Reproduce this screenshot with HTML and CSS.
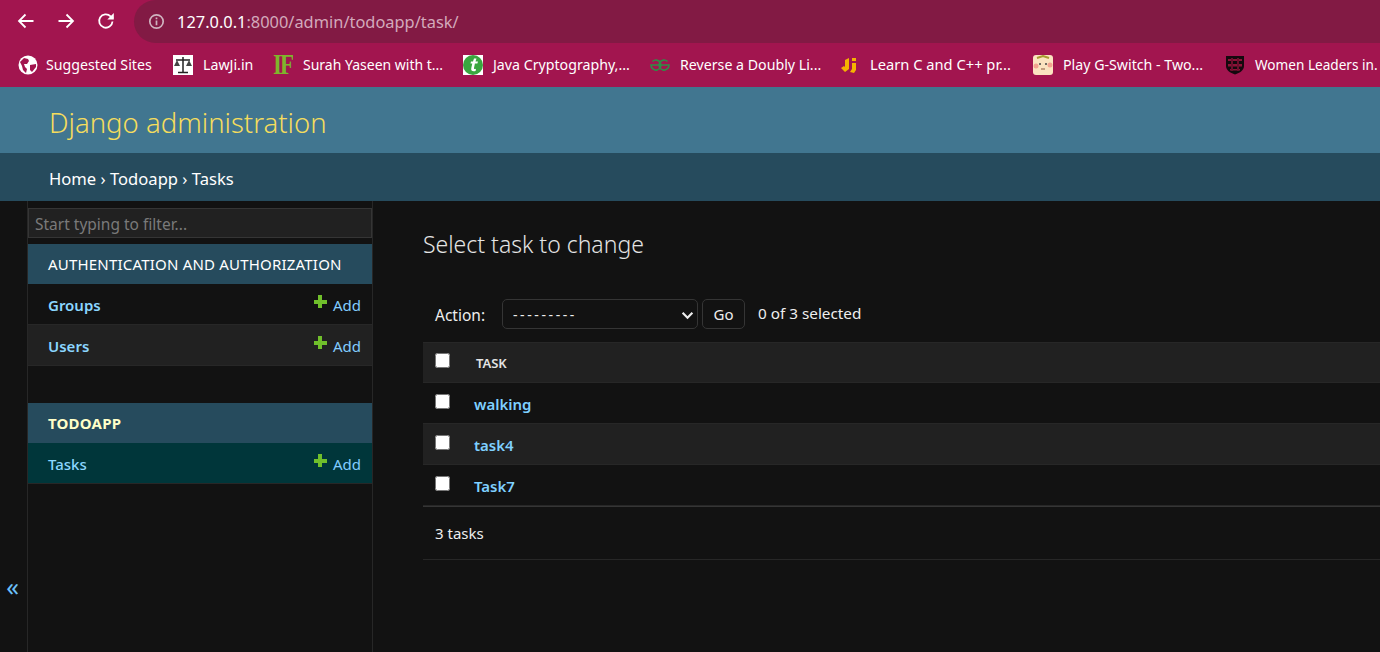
FILE: index.html
```html
<!DOCTYPE html>
<html lang="en">
<head>
    <meta charset="UTF-8">
    <title>Select task to change | Django site admin</title>
    <link rel="stylesheet" href="styles.css">
</head>
<body>
    <div class="toolbar">
        <svg class="tool-icon" viewBox="0 0 20 20"><path d="M17.5 10H3M9.5 3.5L3 10l6.500 6.500"/></svg>
        <svg class="tool-icon" viewBox="0 0 20 20"><path d="M2.500 10H17M10.500 3.500L17 10l-6.500 6.500"/></svg>
        <svg class="tool-icon" viewBox="0 0 20 20"><path d="M16.500 10.500a6.700 6.700 0 1 1-1.900-5.200L17 7.500"/><path class="tool-fill" d="M17.800 2v6.500h-6.500z"/></svg>
        <div class="urlbar">
            <svg class="info-icon" viewBox="0 0 16 16"><circle cx="8" cy="8" r="6.300"/><path d="M8 7v4.600M8 4.200v1.700"/></svg>
            <span class="url"><span class="url-host">127.0.0.1</span>:8000/admin/todoapp/task/</span>
        </div>
    </div>

    <div class="bookmarks">
        <a class="bookmark bm-1">
            <svg class="favicon" viewBox="0 0 20 20"><circle cx="10" cy="10" r="9.500" fill="#fff"/><path fill="#a2154f" d="M2 7l4-4 4 1 1 2-2 3-3 0 1 3 2 2-1 4-3-3-1-4zM12 10l6-1 0 3-4 5-2-2z"/></svg>
            <span>Suggested Sites</span>
        </a>
        <a class="bookmark bm-2">
            <svg class="favicon" viewBox="0 0 20 20"><rect width="20" height="20" fill="#fff"/><path d="M10 2v15M3 5h14M5 17.500h10" fill="none" stroke="#222" stroke-width="1.500"/><path d="M1 11h6l-3-6zM13 11h6l-3-6z" fill="#444"/></svg>
            <span>LawJi.in</span>
        </a>
        <a class="bookmark bm-3">
            <span class="favicon fav-if">IF</span>
            <span>Surah Yaseen with t...</span>
        </a>
        <a class="bookmark bm-4">
            <svg class="favicon" viewBox="0 0 20 20"><rect width="20" height="20" fill="#fff"/><circle cx="10" cy="10" r="10" fill="#3aa63f"/><path d="M11 3.500h2.500l-1 3h2.500l-.6 2h-2.500L11 13c-.2 1 .6 1.200 2 .8l-.4 2.200c-3 .8-5-.2-4.300-3l1-4.500H7.500l.5-2h2z" fill="#fff"/></svg>
            <span>Java Cryptography,...</span>
        </a>
        <a class="bookmark bm-5">
            <svg class="favicon" viewBox="0 0 20 20"><path d="M17.500 6.500A5 5 0 1 0 19 10H1A5 5 0 1 0 2.500 6.500" fill="none" stroke="#2f8d46" stroke-width="1.600"/></svg>
            <span>Reverse a Doubly Li...</span>
        </a>
        <a class="bookmark bm-6">
            <svg class="favicon" viewBox="0 0 20 20"><path d="M9 3v11l-4 3-4-4 3-2 1 1V5zM12 8h4v7l-2 3-4-1 2-3zM12 3h4v3h-4z" fill="#f5b301"/></svg>
            <span class="bm-6-text">Learn C and C++ pr...</span>
        </a>
        <a class="bookmark bm-7">
            <svg class="favicon" viewBox="0 0 20 20"><rect width="20" height="20" rx="3" fill="#fbe3c0"/><circle cx="3" cy="11" r="2.500" fill="#f2a38f"/><circle cx="17" cy="10" r="2.500" fill="#f2a38f"/><path d="M4 3l6-2 6 2" stroke="#a89a30" stroke-width="2" fill="none"/><circle cx="7" cy="9" r="1" fill="#444"/><circle cx="13" cy="9" r="1" fill="#444"/><path d="M8 14h4" stroke="#8a5a40"/></svg>
            <span>Play G-Switch - Two...</span>
        </a>
        <a class="bookmark bm-8">
            <svg class="favicon" viewBox="0 0 20 20"><path d="M1 1h18v10c0 4-4 7-9 8.500C5 18 1 15 1 11z" fill="#14090e"/><path d="M3 4h14v2H3zM3 9h14v2.500H3zM5 14h10v1.500H5z" fill="#8d1238"/><path d="M6 3h2v13H6zM12 3h2v13h-2z" fill="#6b0f2c"/></svg>
            <span>Women Leaders in.</span>
        </a>
    </div>

    <header class="site-header">
        <div class="branding">Django administration</div>
    </header>
    <div class="breadcrumbs">Home &rsaquo; Todoapp &rsaquo; Tasks</div>

    <div class="layout">
        <div class="nav-toggle">&laquo;</div>
        <nav class="sidebar">
            <input class="nav-filter" type="text" placeholder="Start typing to filter...">

            <div class="app-module">
                <div class="app-caption">AUTHENTICATION AND AUTHORIZATION</div>
                <div class="model-row">
                    <a class="model-name">Groups</a>
                    <a class="add-link"><span class="plus"></span>Add</a>
                </div>
                <div class="model-row row-alt">
                    <a class="model-name">Users</a>
                    <a class="add-link"><span class="plus"></span>Add</a>
                </div>
            </div>

            <div class="app-module">
                <div class="app-caption caption-current">TODOAPP</div>
                <div class="model-row row-current">
                    <a class="model-name name-current">Tasks</a>
                    <a class="add-link"><span class="plus"></span>Add</a>
                </div>
            </div>
        </nav>

        <main class="content">
            <h1>Select task to change</h1>
            <div class="actions">
                <label class="action-label">Action:</label>
                <div class="select-wrap">
                    <select class="action-select">
                        <option>---------</option>
                    </select>
                    <svg class="select-arrow" viewBox="0 0 12 8"><path d="M1.500 1.500L6 6l4.500-4.500"/></svg>
                </div>
                <button class="go-button" type="button">Go</button>
                <span class="counter">0 of 3 selected</span>
            </div>
            <table class="results">
                <thead>
                    <tr>
                        <th class="check-cell"><input type="checkbox"></th>
                        <th class="task-head">TASK</th>
                    </tr>
                </thead>
                <tbody>
                    <tr>
                        <td class="check-cell"><input type="checkbox"></td>
                        <td><a class="task-link">walking</a></td>
                    </tr>
                    <tr class="row-alt">
                        <td class="check-cell"><input type="checkbox"></td>
                        <td><a class="task-link">task4</a></td>
                    </tr>
                    <tr>
                        <td class="check-cell"><input type="checkbox"></td>
                        <td><a class="task-link">Task7</a></td>
                    </tr>
                </tbody>
            </table>
            <p class="paginator">3 tasks</p>
        </main>
    </div>
</body>
</html>
```

FILE: styles.css
```css
html, body {
    margin: 0;
    height: 652px;
    overflow: hidden;
}

body {
    font-family: "Noto Sans", "Open Sans", sans-serif;
    background-color: #121212;
    color: #eee;
    font-size: 14px;
}

a {
    text-decoration: none;
}

/* browser chrome */
.toolbar {
    height: 44px;
    background-color: #a2154f;
    display: flex;
    align-items: center;
    padding-left: 16px;
    box-sizing: border-box;
}

.tool-icon {
    width: 20px;
    height: 20px;
    margin-right: 20px;
    fill: none;
    stroke: #fff;
    stroke-width: 1.8;
    margin-top: -2px;
}

.tool-icon .tool-fill {
    fill: #fff;
    stroke: none;
}

.urlbar {
    flex: 1;
    height: 43px;
    margin-left: -2px;
    background-color: #821a44;
    border-radius: 22px 0 0 22px;
    display: flex;
    align-items: center;
    padding-left: 14px;
    margin-top: -1px;
}

.info-icon {
    width: 17px;
    height: 17px;
    fill: none;
    stroke: #cfb3bf;
    stroke-width: 1.6;
    margin-right: 12px;
}

.url {
    font-size: 16.4px;
    color: #d3a9bb;
}

.url-host {
    color: #fff;
}

.bookmarks {
    height: 43px;
    box-sizing: border-box;
    padding: 0 0 2px 18px;
    background-color: #a2154f;
    display: flex;
    align-items: center;
    color: #fff;
    font-size: 14.2px;
    white-space: nowrap;
    overflow: hidden;
}

.bookmark {
    display: flex;
    align-items: center;
    flex: none;
    gap: 10px;
}

.favicon {
    width: 20px;
    height: 20px;
    flex: none;
}

.fav-if {
    font-family: "Liberation Serif", serif;
    font-weight: bold;
    font-size: 23px;
    line-height: 20px;
    color: #7fb52c;
    letter-spacing: -2px;
    transform: scaleY(1.25);
}

.bm-1 { width: 155px; gap: 8px; }
.bm-2 { width: 100px; }
.bm-3 { width: 190px; font-size: 14px; }
.bm-4 { width: 187px; }
.bm-5 { width: 190px; }
.bm-6 { width: 193px; font-size: 14.7px; }
.bm-6-text { margin-top: -2px; }
.bm-7 { width: 192px; }
.bm-8 { font-size: 13.6px; }

/* django admin */
.site-header {
    height: 62px;
    background-color: #417690;
    padding: 4px 0 0 49px;
    display: flex;
    align-items: center;
}

.branding {
    color: #f5dd5d;
    font-size: 27.5px;
    font-weight: 300;
}

.breadcrumbs {
    height: 48px;
    line-height: 51px;
    background-color: #264b5d;
    color: #fff;
    padding-left: 49px;
    font-size: 16.6px;
}

.layout {
    display: flex;
    height: 451px;
}

.nav-toggle {
    flex: none;
    border-right: 1px solid #272727;
    font-size: 25px;
    line-height: 28px;
    padding-top: 371px;
    text-align: center;
    box-sizing: border-box;
    height: 451px;
    width: 28px;
    padding-right: 2px;
    color: #6cc0fa;
}

.sidebar {
    width: 344px;
    flex: none;
    border-right: 1px solid #272727;
    padding-top: 7px;
}

.nav-filter {
    display: block;
    width: 100%;
    height: 30px;
    box-sizing: border-box;
    margin: 0 0 6px;
    padding: 1px 6px 0;
    background-color: #212121;
    border: 1px solid #353535;
    color: #eee;
    font-family: inherit;
    font-size: 15.5px;
}

.nav-filter::placeholder {
    color: #7a7a7a;
}

.app-module {
    margin-bottom: 37px;
}

.app-caption {
    height: 40px;
    line-height: 41px;
    background-color: #264b5d;
    color: #fff;
    padding-left: 20px;
    font-size: 15px;
    letter-spacing: .2px;
}

.caption-current {
    font-weight: bold;
    color: #ffffc8;
}

.model-row {
    height: 38px;
    padding: 2px 11px 0 20px;
    border-bottom: 1px solid #272727;
    display: flex;
    align-items: center;
    justify-content: space-between;
}

.row-alt {
    background-color: #212121;
}

.row-current {
    background-color: #00363a;
}

.model-name {
    color: #8bd6ff;
    font-weight: 600;
    font-size: 15px;
}

.name-current {
    font-weight: 500;
}

.add-link {
    color: #82ccff;
    font-size: 15px;
    display: flex;
    align-items: center;
}

.plus {
    width: 13px;
    height: 13px;
    margin-right: 6px;
    margin-top: -7px;
    background:
        linear-gradient(#70bf2b, #70bf2b) center / 4px 13px no-repeat,
        linear-gradient(#70bf2b, #70bf2b) center / 13px 4px no-repeat;
}

.content {
    flex: 1;
    padding: 0 0 0 50px;
    min-width: 0;
}

h1 {
    margin: 27px 0 0;
    font-size: 23px;
    font-weight: 300;
    line-height: 32px;
    color: #e4e4e4;
}

.actions {
    display: flex;
    align-items: center;
    height: 30px;
    margin-top: 39px;
    padding-left: 12px;
}

.action-label {
    width: 67px;
    flex: none;
    margin-top: 1px;
    font-size: 15.5px;
}

.select-wrap {
    position: relative;
    width: 196px;
    height: 30px;
}

.action-select {
    appearance: none;
    display: block;
    width: 100%;
    height: 30px;
    background-color: #121212;
    color: #eee;
    border: 1px solid #353535;
    border-radius: 5px;
    padding: 0 10px;
    font-family: inherit;
    font-size: 14px;
    letter-spacing: 2.6px;
}

.select-arrow {
    position: absolute;
    right: 4px;
    top: 12px;
    width: 13px;
    height: 9px;
    fill: none;
    stroke: #eee;
    stroke-width: 2;
    pointer-events: none;
}

.go-button {
    width: 43px;
    height: 30px;
    margin-left: 4px;
    background-color: #121212;
    color: #eee;
    border: 1px solid #353535;
    border-radius: 5px;
    padding: 0;
    font-family: inherit;
    font-size: 15px;
}

.counter {
    margin-left: 13px;
    margin-top: -3px;
    font-size: 15.3px;
}

.results {
    width: 100%;
    margin-top: 13px;
    border-collapse: collapse;
}

.results th, .results td {
    height: 41px;
    padding: 1px 0 0;
    border-bottom: 1px solid #272727;
    text-align: left;
    box-sizing: border-box;
}

.results thead th {
    height: 40px;
    padding-top: 0;
    background-color: #212121;
    border-top: 1px solid #272727;
}

.results tbody .check-cell {
    padding-top: 2px;
}

.check-cell {
    width: 51px;
    padding-left: 12px !important;
    box-sizing: border-box;
}

.check-cell input {
    display: block;
    width: 15px;
    height: 15px;
    margin: -5px 0 0 0;
}

.task-head {
    font-size: 13px;
    font-weight: 600;
    padding: 1px 0 0 2px !important;
    color: #e4e4e4;
}

.task-link {
    color: #7fd0ff;
    font-weight: 600;
    font-size: 15px;
}

.paginator {
    margin: 0;
    height: 52px;
    line-height: 52px;
    padding-left: 12px;
    font-size: 15px;
    border-top: 1px solid #353535;
    border-bottom: 1px solid #272727;
}
```
